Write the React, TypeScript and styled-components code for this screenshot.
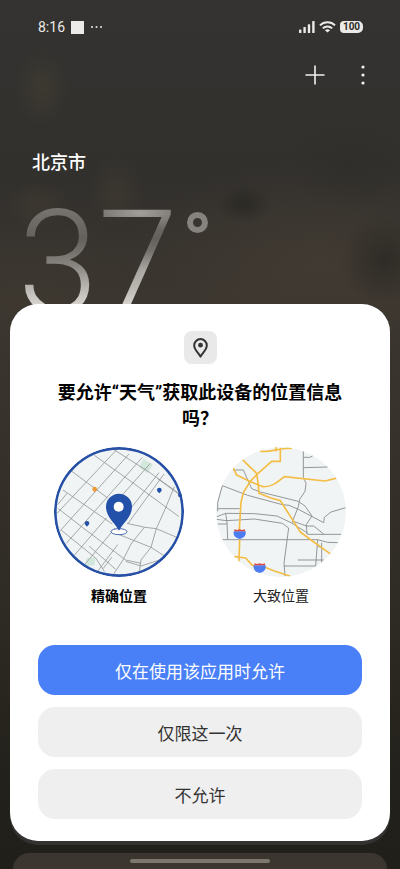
import React from "react";
import styled, { createGlobalStyle } from "styled-components";

const GlobalStyle = createGlobalStyle`
  *, *::before, *::after { box-sizing: border-box; }
  body {
    margin: 0;
    background: #23211c;
    font-family: Roboto, "Noto Sans CJK SC", sans-serif;
  }
  button { font-family: inherit; border: 0; cursor: pointer; }
`;

const Screen = styled.div`
  position: relative;
  min-height: 100vh;
  display: flex;
  flex-direction: column;
  overflow: hidden;
  color: #fff;
  background:
    radial-gradient(ellipse 26px 38px at 42px 88px, rgba(84, 76, 52, 0.3), transparent),
    radial-gradient(ellipse 28px 36px at 116px 192px, rgba(84, 74, 56, 0.25), transparent),
    radial-gradient(ellipse 34px 24px at 38px 204px, rgba(84, 74, 56, 0.25), transparent),
    radial-gradient(ellipse 28px 20px at 244px 204px, rgba(38, 37, 33, 0.7), transparent),
    radial-gradient(ellipse 44px 44px at 384px 260px, rgba(40, 38, 34, 0.7), transparent),
    radial-gradient(ellipse 60px 46px at 350px 165px, rgba(46, 45, 41, 0.6), transparent),
    radial-gradient(ellipse 200px 100px at 320px 260px, rgba(76, 66, 54, 0.45), transparent),
    radial-gradient(ellipse 140px 80px at 30px 290px, rgba(72, 64, 52, 0.25), transparent),
    linear-gradient(#343331 0, #32302d 180px, #3a352f 300px, #38332c 400px, #2f2b25 600px, #23211b 780px, #211f1a 100%);
`;

const StatusBar = styled.div`
  display: flex;
  align-items: center;
  justify-content: space-between;
  height: 54px;
  padding: 0 37px 0 38px;
  font-size: 14px;
  color: #eceae8;
`;

const StatusGroup = styled.div<{ $gap: number }>`
  display: flex;
  align-items: center;
  gap: ${(p) => p.$gap}px;
`;

const NoticeSquare = styled.span`
  width: 13px;
  height: 13px;
  background: #eceae8;
`;

const Battery = styled.span`
  display: flex;
  align-items: center;
  justify-content: center;
  width: 23px;
  height: 12px;
  border-radius: 4px 5px 5px 4px;
  background: #eceae8;
  color: #2b2a27;
  font-size: 10px;
  line-height: 12px;
  font-weight: 700;
`;

const Toolbar = styled.nav`
  display: flex;
  justify-content: flex-end;
  gap: 8px;
  height: 42px;
  padding: 0 17px;
`;

const IconButton = styled.button`
  display: flex;
  align-items: center;
  justify-content: center;
  width: 40px;
  height: 42px;
  padding: 0;
  background: none;
  color: #f2f1ef;
`;

const City = styled.h1`
  margin: 53px 32px 0;
  font-size: 18px;
  line-height: 28px;
  font-weight: 500;
`;

const Temperature = styled.div`
  display: flex;
  align-items: flex-start;
  padding: 12px 18px 0;
`;

const Degrees = styled.span`
  font-size: 144px;
  line-height: 150px;
  font-weight: 300;
  color: transparent;
  background:
    radial-gradient(ellipse 46px 18px at 122px 24px, rgba(200, 196, 190, 0.55), transparent),
    radial-gradient(ellipse 36px 22px at 128px 84px, rgba(200, 196, 190, 0.5), transparent),
    linear-gradient(#76726d 20px, #64605b 50px, #85817c 75px, #b5b1ac 96px, #e2dfda 122px);
  background-clip: text;
  -webkit-background-clip: text;
`;

const DegreeRing = styled.span`
  width: 21px;
  height: 21px;
  margin: 23px 0 0 9px;
  border: 6px solid #86827d;
  border-radius: 50%;
`;

const ForecastCard = styled.div`
  display: flex;
  justify-content: center;
  height: 16px;
  margin: auto 13px 0;
  padding-top: 6px;
  border-radius: 28px 28px 0 0;
  background: #3b362f;
`;

const HomeIndicator = styled.span`
  width: 140px;
  height: 4px;
  border-radius: 2px;
  background: #7d776e;
`;

const Dialog = styled.section`
  position: absolute;
  left: 10px;
  right: 10px;
  bottom: 28px;
  display: flex;
  flex-direction: column;
  align-items: center;
  padding: 27px 28px 22px;
  border-radius: 28px;
  background: #fff;
  box-shadow: 0 4px 0 #333230;
  color: #000;
`;

const PinBadge = styled.span`
  display: flex;
  align-items: center;
  justify-content: center;
  width: 33px;
  height: 33px;
  border-radius: 8px;
  background: #e9e9e9;
`;

const Title = styled.h2`
  margin: 16px 16px 0;
  font-size: 18px;
  line-height: 26px;
  font-weight: 700;
  text-align: center;
`;

const Choices = styled.fieldset`
  display: grid;
  grid-template-columns: 1fr 1fr;
  width: 100%;
  margin: 15px 0 38px;
  padding: 0;
  border: 0;
`;

const Choice = styled.label<{ $selected: boolean }>`
  display: flex;
  flex-direction: column;
  align-items: center;
  gap: 8px;
  font-size: 14px;
  line-height: 22px;
  font-weight: ${(p) => (p.$selected ? 700 : 400)};
  color: ${(p) => (p.$selected ? "#000" : "#222")};
  cursor: pointer;
`;

const HiddenRadio = styled.input`
  position: absolute;
  opacity: 0;
  pointer-events: none;
`;

const MapPicture = styled.svg`
  display: block;
  width: 130px;
  height: 130px;
  border-radius: 50%;
`;

const Actions = styled.div`
  display: flex;
  flex-direction: column;
  gap: 12px;
  width: 100%;
`;

const ActionButton = styled.button<{ $primary?: boolean }>`
  height: 50px;
  border-radius: 17px;
  font-size: 17px;
  color: ${(p) => (p.$primary ? "#fff" : "#333")};
  background: ${(p) => (p.$primary ? "#4a80f7" : "#efefef")};
`;

function PreciseMap() {
  return (
    <MapPicture viewBox="15 13 390 390" aria-hidden="true">
      <circle cx="210" cy="208" r="195" fill="#f1f4f4" />
      <path d="M283 48 L312 66 L296 92 L270 74Z" fill="#d3e8dc" />
      <path d="M112 346 L140 344 L136 368 L112 370Z" fill="#d3e8dc" />
      <g fill="none" stroke="#909396" strokeWidth="2.4">
        <path d="M26 186 L54 152 M24 212 L204 20 M34 264 L240 34 M52 302 L280 44 M76 338 L172 226 M212 166 L304 62 M102 372 L198 256 M238 206 L330 90 M140 394 L206 306 M236 244 L345 94 M162 378 L188 344" />
        <path d="M190 18 L300 88 L392 154 M136 38 L240 112 L390 222 M66 84 L176 166 M42 142 L190 244 M28 198 L100 254 L230 352 L276 362 M36 262 L140 346 L166 386 M120 310 L200 380" />
        <path d="M234 242 L288 254 L322 258 L402 292 M206 274 L306 314 L362 350 M376 132 L348 200 L322 258 L306 314 L276 352 L270 396 M286 254 L246 304 L222 352 L190 400 M326 108 L400 162 M350 346 L276 370 L230 356" />
      </g>
      <ellipse cx="210" cy="267" rx="24" ry="9" fill="#fff" stroke="#2650a6" strokeWidth="2.5" />
      <path d="M210 264 C198 240 171 224 171 192 A39 39 0 0 1 249 192 C249 224 222 240 210 264Z" fill="#2350a8" />
      <circle cx="209" cy="192" r="15" fill="#fff" />
      <path d="M137 149 C134 145 130 143 130 139 A7 7 0 0 1 144 139 C144 143 140 145 137 149Z" fill="#ec9a31" />
      <path d="M114 252 C111 248 107 247 107 242 A7 7 0 0 1 121 242 C121 247 117 248 114 252Z" fill="#2350a8" />
      <path d="M331 152 C328 148 324 147 324 142 A7 7 0 0 1 338 142 C338 147 334 148 331 152Z" fill="#2350a8" />
      <circle cx="394" cy="157" r="7" fill="#2350a8" />
      <circle cx="210" cy="208" r="191" fill="none" stroke="#2650a6" strokeWidth="8" />
    </MapPicture>
  );
}

function Shield({ x, y }: { x: number; y: number }) {
  return (
    <g transform={`translate(${x} ${y})`}>
      <path d="M-18 -5 H18 C20 8 12 16 0 18 C-12 16 -20 8 -18 -5Z" fill="#4c7df0" />
      <path d="M-15 -11 L-8 -9 L0 -11 L8 -9 L15 -11 L17 -5 H-17Z" fill="#dc4a45" />
    </g>
  );
}

function ApproximateMap() {
  return (
    <MapPicture viewBox="15 13 390 390" aria-hidden="true">
      <circle cx="210" cy="208" r="195" fill="#f1f4f4" />
      <g fill="none" stroke="#85888b" strokeWidth="2.6" strokeLinejoin="round">
        <path d="M277 26 V104 L285 122 L282 146 L266 170 L262 192 L243 240 M277 44 H296 L305 40 M277 75 L350 73" />
        <path d="M66 82 H97 L122 138 L148 148 L262 176 L282 190 L303 220 L286 245 L288 274" />
        <path d="M20 206 V180 L34 129 L110 158 L214 186 L234 188 L262 200 L338 240 L340 224 L360 208 L404 195" />
        <path d="M20 198 H86 M18 222 L44 212 L130 213 L198 220 L240 240 L288 270 L290 275 H390 M17 230 L46 234 L130 229 L214 242 L233 256 L219 362 L222 400 M44 212 L48 238 L50 290 M20 244 H48 M248 236 L286 250 H308 L338 274" />
        <path d="M34 291 H320 M320 291 L314 370 H219 M320 291 L350 299 L380 300 M332 300 V360 M320 310 L334 316 M260 352 H338" />
      </g>
      <g fill="none" stroke="#f3bd45" strokeWidth="5" strokeLinejoin="round" strokeLinecap="round">
        <path d="M150 26 C180 30 210 14 240 17 M195 14 V24 M208 18 V56 H182 L137 96 L118 116 L98 148 L90 178 L85 260 M96 52 L112 68 L137 92 L141 120 L144 152 L180 166 L208 174 L240 224 L268 268 L300 292 L356 332" />
        <path d="M68 78 L76 96 L120 118 L156 132 C184 134 202 116 220 102 L342 115 L374 107" />
        <path d="M86 292 L84 354 M72 342 L104 346 L122 366 L136 374 M162 374 L188 384 L236 400" />
      </g>
      <Shield x={86} y={271} />
      <Shield x={146} y={373} />
    </MapPicture>
  );
}

export default function App() {
  const [accuracy, setAccuracy] = React.useState("precise");
  return (
    <>
      <GlobalStyle />
      <Screen>
        <StatusBar>
          <StatusGroup $gap={6}>
            <span>8:16</span>
            <NoticeSquare />
            <svg width="13" height="4" viewBox="0 0 13 4" fill="#eceae8" aria-hidden="true">
              <circle cx="2" cy="2" r="1" />
              <circle cx="6.5" cy="2" r="1" />
              <circle cx="11" cy="2" r="1" />
            </svg>
          </StatusGroup>
          <StatusGroup $gap={4}>
            <svg width="16" height="12" viewBox="0 0 16 12" fill="#eceae8" aria-hidden="true">
              <rect x="0" y="8.5" width="2.4" height="3.5" rx="0.6" />
              <rect x="4.4" y="6" width="2.4" height="6" rx="0.6" />
              <rect x="8.8" y="3.2" width="2.4" height="8.8" rx="0.6" />
              <rect x="13.2" y="0" width="2.4" height="12" rx="0.6" />
            </svg>
            <svg width="17" height="12" viewBox="0 0 17 12" fill="none" stroke="#eceae8" strokeWidth="2" aria-hidden="true">
              <path d="M1 4.4 C5 0.2 12 0.2 16 4.4" />
              <path d="M3.8 7.4 C6.4 4.8 10.6 4.8 13.2 7.4" />
              <path d="M8.5 11.6 L5.9 9.2 C7.3 7.9 9.7 7.9 11.1 9.2Z" fill="#eceae8" stroke="none" />
            </svg>
            <Battery>100</Battery>
          </StatusGroup>
        </StatusBar>

        <Toolbar>
          <IconButton aria-label="添加城市">
            <svg width="20" height="20" viewBox="0 0 20 20" stroke="currentColor" strokeWidth="1.6" aria-hidden="true">
              <path d="M10 0.5 V19.5 M0.5 10 H19.5" />
            </svg>
          </IconButton>
          <IconButton aria-label="更多">
            <svg width="4" height="20" viewBox="0 0 4 20" fill="currentColor" aria-hidden="true">
              <circle cx="2" cy="2" r="1.6" />
              <circle cx="2" cy="10" r="1.6" />
              <circle cx="2" cy="18" r="1.6" />
            </svg>
          </IconButton>
        </Toolbar>

        <City>北京市</City>
        <Temperature>
          <Degrees>37</Degrees>
          <DegreeRing />
        </Temperature>
        <ForecastCard>
          <HomeIndicator />
        </ForecastCard>

        <Dialog role="dialog" aria-labelledby="permission-title">
          <PinBadge>
            <svg width="15" height="20" viewBox="0 0 15 20" fill="none" aria-hidden="true">
              <path d="M7.5 18.6 C6 15.2 1.2 11.8 1.2 7.4 A6.3 6.3 0 0 1 13.8 7.4 C13.8 11.8 9 15.2 7.5 18.6Z" stroke="#333" strokeWidth="2" strokeLinejoin="round" />
              <circle cx="7.5" cy="7.2" r="2.4" fill="#333" />
            </svg>
          </PinBadge>
          <Title id="permission-title">要允许“天气”获取此设备的位置信息吗？</Title>
          <Choices aria-label="位置信息精度">
            <Choice $selected={accuracy === "precise"}>
              <HiddenRadio type="radio" name="accuracy" checked={accuracy === "precise"} onChange={() => setAccuracy("precise")} />
              <PreciseMap />
              精确位置
            </Choice>
            <Choice $selected={accuracy === "approximate"}>
              <HiddenRadio type="radio" name="accuracy" checked={accuracy === "approximate"} onChange={() => setAccuracy("approximate")} />
              <ApproximateMap />
              大致位置
            </Choice>
          </Choices>
          <Actions>
            <ActionButton $primary>仅在使用该应用时允许</ActionButton>
            <ActionButton>仅限这一次</ActionButton>
            <ActionButton>不允许</ActionButton>
          </Actions>
        </Dialog>
      </Screen>
    </>
  );
}
